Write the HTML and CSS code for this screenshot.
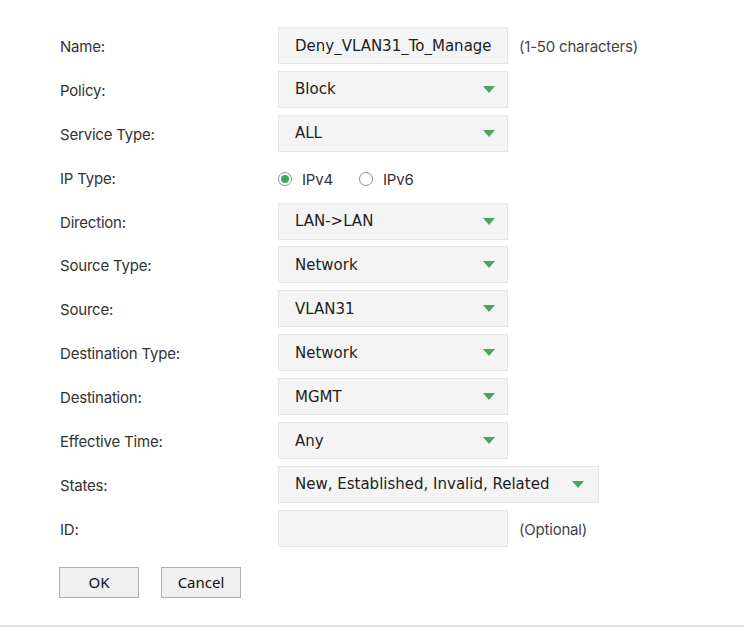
FILE: index.html
```html
<!DOCTYPE html>
<html>
<head>
    <meta charset="utf-8" />
    <title>ACL Rule</title>
    <link rel="stylesheet" href="styles.css">
</head>
<body>
    <div class="page">
        <div class="form">
            <div class="label">Name:</div>
            <div class="field">
                <div class="box"><span class="value">Deny_VLAN31_To_Manage</span></div>
                <span class="hint">(1-50 characters)</span>
            </div>

            <div class="label">Policy:</div>
            <div class="field">
                <div class="box select"><span class="value">Block</span><span class="arrow"></span></div>
            </div>

            <div class="label">Service Type:</div>
            <div class="field">
                <div class="box select"><span class="value">ALL</span><span class="arrow"></span></div>
            </div>

            <div class="label">IP Type:</div>
            <div class="field radios">
                <label class="radio"><span class="dot checked"></span>IPv4</label>
                <label class="radio"><span class="dot"></span>IPv6</label>
            </div>

            <div class="label">Direction:</div>
            <div class="field">
                <div class="box select"><span class="value">LAN-&gt;LAN</span><span class="arrow"></span></div>
            </div>

            <div class="label">Source Type:</div>
            <div class="field">
                <div class="box select"><span class="value">Network</span><span class="arrow"></span></div>
            </div>

            <div class="label">Source:</div>
            <div class="field">
                <div class="box select"><span class="value">VLAN31</span><span class="arrow"></span></div>
            </div>

            <div class="label">Destination Type:</div>
            <div class="field">
                <div class="box select"><span class="value">Network</span><span class="arrow"></span></div>
            </div>

            <div class="label">Destination:</div>
            <div class="field">
                <div class="box select"><span class="value">MGMT</span><span class="arrow"></span></div>
            </div>

            <div class="label">Effective Time:</div>
            <div class="field">
                <div class="box select"><span class="value">Any</span><span class="arrow"></span></div>
            </div>

            <div class="label">States:</div>
            <div class="field">
                <div class="box select wide"><span class="value">New, Established, Invalid, Related</span><span class="arrow"></span></div>
            </div>

            <div class="label">ID:</div>
            <div class="field">
                <div class="box"></div>
                <span class="hint">(Optional)</span>
            </div>
        </div>

        <div class="buttons">
            <button class="btn">OK</button>
            <button class="btn">Cancel</button>
        </div>
    </div>
    <div class="rule"></div>
</body>
</html>
```

FILE: styles.css
```css
html, body {
    margin: 0;
    background: #fff;
    font-family: "Inter", sans-serif;
    color: #333;
}

.page {
    padding: 27px 0 0 60px;
    height: 625px;
    box-sizing: border-box;
}

.form {
    display: grid;
    grid-template-columns: 218px auto;
    row-gap: 6.9px;
    align-items: center;
}

.label {
    font-size: 15px;
    letter-spacing: -0.2px;
    color: #333;
    padding-top: 2px;
}

.field {
    display: flex;
    align-items: center;
    gap: 11px;
    height: 37px;
}

.box {
    display: flex;
    align-items: center;
    gap: 10px;
    box-sizing: border-box;
    width: 230px;
    height: 37px;
    padding: 0 12px 0 16px;
    background: #f4f4f4;
    border: 1px solid #e6e6e6;
    font-family: "DejaVu Sans", Verdana, sans-serif;
    font-size: 15px;
    color: #222;
    white-space: nowrap;
}

.box.wide {
    width: 321px;
    padding-right: 14px;
}

.value {
    flex: 1;
    overflow: hidden;
}

.arrow {
    width: 0;
    height: 0;
    border-left: 6px solid transparent;
    border-right: 6px solid transparent;
    border-top: 7px solid #45a85a;
    flex-shrink: 0;
}

.hint {
    font-size: 15px;
    letter-spacing: -0.2px;
    color: #444;
    padding-top: 2px;
}

.radios {
    gap: 26px;
}

.radio {
    display: flex;
    align-items: center;
    gap: 10px;
    font-size: 15px;
    letter-spacing: -0.2px;
    color: #333;
    padding-top: 4px;
}

.dot {
    width: 14px;
    height: 14px;
    box-sizing: border-box;
    border: 1px solid #8f8f8f;
    border-radius: 50%;
    background: #fff;
    position: relative;
}

.dot.checked::after {
    content: '';
    position: absolute;
    left: 2px;
    top: 2px;
    width: 8px;
    height: 8px;
    border-radius: 50%;
    background: #3ea85a;
}

.buttons {
    display: flex;
    gap: 22px;
    margin: 20px 0 0 -1px;
}

.btn {
    width: 80px;
    height: 31px;
    background: #f0f0f0;
    border: 1px solid #adadad;
    font-family: "Noto Sans", sans-serif;
    font-size: 15px;
    color: #111;
    padding: 0;
}

.rule {
    height: 2px;
    background: #e2e2e2;
}
```
